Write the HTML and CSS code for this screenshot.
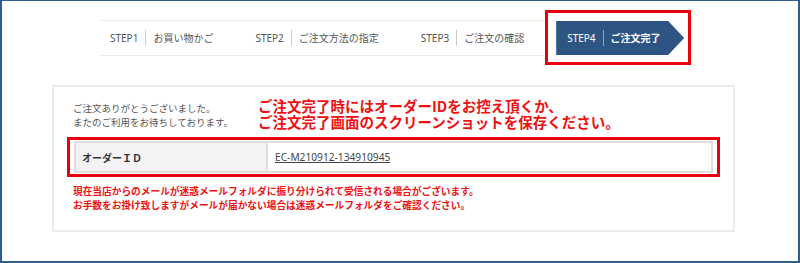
FILE: index.html
```html
<!DOCTYPE html>
<html lang="ja">
  <head>
    <meta charset="UTF-8" />
    <meta name="viewport" content="width=device-width, initial-scale=1.0" />
    <title>ご注文完了</title>
    <link rel="stylesheet" href="styles.css">
  </head>
  <body>
    <div class="frame">
      <div class="steps">
        <div class="step first">
          <span class="step-no">STEP1</span><span class="step-name">お買い物かご</span>
        </div>
        <div class="step">
          <span class="step-no">STEP2</span><span class="step-name">ご注文方法の指定</span>
        </div>
        <div class="step">
          <span class="step-no">STEP3</span><span class="step-name">ご注文の確認</span>
        </div>
        <div class="mark step-mark">
          <div class="step-current">
            <span class="step-no">STEP4</span><span class="step-name">ご注文完了</span>
          </div>
        </div>
      </div>

      <div class="card">
        <div class="intro">
          <p class="thanks">
            ご注文ありがとうございました。<br />
            またのご利用をお待ちしております。
          </p>
          <p class="notice">
            ご注文完了時にはオーダーIDをお控え頂くか、<br />
            ご注文完了画面のスクリーンショットを保存ください。
          </p>
        </div>

        <div class="mark table-mark">
          <table class="order-table">
            <tr>
              <th>オーダーＩＤ</th>
              <td><a href="#">EC-M210912-134910945</a></td>
            </tr>
          </table>
        </div>

        <p class="mail-note">
          現在当店からのメールが迷惑メールフォルダに振り分けられて受信される場合がございます。<br />
          お手数をお掛け致しますがメールが届かない場合は迷惑メールフォルダをご確認ください。
        </p>
      </div>
    </div>
  </body>
</html>
```

FILE: styles.css
```css
body {
  margin: 0;
  padding: 0;
  background-color: #fff;
  font-family: "Noto Sans", "Noto Sans CJK JP", sans-serif;
}
.frame {
  box-sizing: border-box;
  width: 800px;
  height: 263px;
  border-top: 1px solid #2b5f8e;
  border-left: 2px solid #2b5f8e;
  border-right: 2px solid #2b5f8e;
  border-bottom: 2px solid #2b5f8e;
  overflow: hidden;
}

/* steps */
.steps {
  display: flex;
  align-items: center;
  margin: 9px 0 0 98px;
}
.step {
  display: flex;
  align-items: center;
  height: 34px;
  padding: 0 21px;
  border-top: 1px solid #ececec;
  border-bottom: 1px solid #ececec;
  font-size: 10px;
  color: #555;
}
.step.first {
  padding-left: 10px;
}
.step-no {
  padding-right: 7px;
  margin-right: 7px;
  border-right: 1px solid #ccc;
  line-height: 16px;
}
.step-name {
  line-height: 16px;
}
.mark {
  border: 3px solid #e8000f;
}
.step-mark {
  padding: 8px 4px 7px 8px;
}
.step-current {
  display: flex;
  align-items: center;
  width: 128px;
  height: 34px;
  box-sizing: border-box;
  padding-left: 11px;
  background-color: #2d5584;
  color: #fff;
  font-size: 10px;
  clip-path: polygon(0 0, 112px 0, 100% 50%, 112px 100%, 0 100%);
}
.step-current .step-no {
  border-right-color: #8aa3c2;
}
.step-current .step-name {
  font-weight: bold;
}

/* card */
.card {
  margin: 20px 63px 0 50px;
  border: 2px solid #ececec;
  padding: 11px 20px 16px 19px;
  height: 147px;
  box-sizing: border-box;
}
.intro {
  display: flex;
  align-items: flex-start;
}
.thanks {
  margin: 4px 0 0 0;
  width: 185px;
  font-size: 9.5px;
  line-height: 14px;
  color: #555;
}
.notice {
  margin: 0;
  font-family: "Noto Sans CJK JP", sans-serif;
  font-size: 14.5px;
  line-height: 16px;
  font-weight: bold;
  color: #ee1111;
}
.table-mark {
  margin: 7px -7px 0 -6px;
  padding: 1px 4px;
}
.order-table {
  width: 100%;
  border-collapse: collapse;
  border: 2px solid #dedede;
  font-size: 10px;
}
.order-table th {
  width: 184px;
  height: 28px;
  padding: 0 0 0 6px;
  text-align: left;
  background-color: #f3f3f3;
  border-right: 2px solid #dedede;
  color: #333;
  font-weight: bold;
}
.order-table td {
  padding: 0 0 0 7px;
  color: #444;
}
.order-table a {
  color: #444;
  text-decoration: underline;
  font-size: 10.2px;
}
.mail-note {
  margin: 8px 0 0 0;
  font-size: 9.7px;
  line-height: 14px;
  font-weight: bold;
  color: #ee1111;
}
```
